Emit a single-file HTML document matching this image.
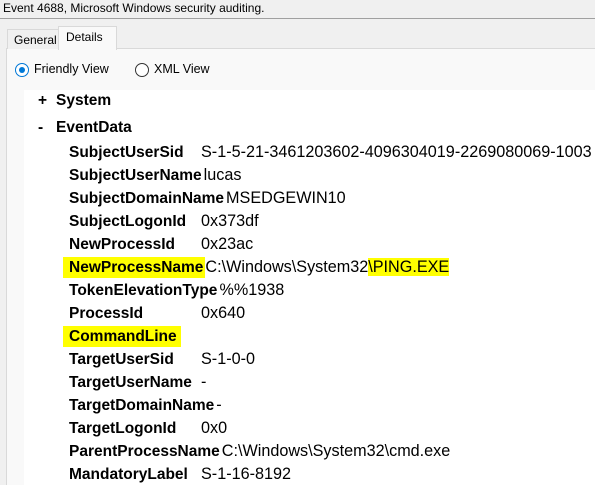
<!DOCTYPE html>
<html><head><meta charset="utf-8"><style>
html,body{margin:0;width:595px;height:485px;overflow:hidden}
body{background:#f0f0f0;font-family:"Liberation Sans",sans-serif;position:relative}
.title{position:absolute;left:3px;top:1px;font-size:12px;color:#000}
.hl{position:absolute;left:0;top:18px;width:595px;height:1px;background:#a0a0a0}
.tab{position:absolute;font-size:12px;color:#000;border:1px solid #d9d9d9;border-bottom:none}
.panel{position:absolute;left:6px;top:48px;width:600px;height:450px;border:1px solid #d9d9d9;background:#f9f9f9}
.radio{position:absolute;top:63px;width:12px;height:12px;border:1px solid #333;border-radius:50%;background:#fff}
.rl{position:absolute;top:62px;font-size:12.5px}
.white{position:absolute;left:24px;top:90px;width:580px;height:400px;background:#fff}
.row{position:absolute;left:69px;font-size:16.2px;white-space:nowrap;height:21px;line-height:21px}
.n{font-weight:bold;font-size:15.5px;display:inline-block;min-width:132px;padding-right:2px;box-sizing:border-box}
.y{background:#ffff00}
.h{position:absolute;font-weight:bold;font-size:15.5px;line-height:21px}
</style></head><body>
<div class="title">Event 4688, Microsoft Windows security auditing.</div>
<div class="hl"></div>
<div class="panel"></div>
<div class="tab" style="left:7px;top:29px;width:50px;height:19px;background:#f0f0f0;line-height:21px;padding-left:6px">General</div>
<div class="tab" style="left:58px;top:26px;width:50px;height:23px;background:#f9f9f9;line-height:20px;padding-left:7px">Details</div>
<div class="radio" style="left:15px;border-color:#0078d7"><div style="position:absolute;left:3px;top:3px;width:6px;height:6px;border-radius:50%;background:#0078d7"></div></div>
<div class="rl" style="left:34px">Friendly View</div>
<div class="radio" style="left:135px"></div>
<div class="rl" style="left:154px">XML View</div>
<div class="white"></div>
<div class="h" style="left:38px;top:90px">+</div><div class="h" style="left:56px;top:90px">System</div>
<div class="h" style="left:38px;top:117px">-</div><div class="h" style="left:56px;top:117px">EventData</div>
<div class="row" style="top:142px"><span class="n">SubjectUserSid</span>S-1-5-21-3461203602-4096304019-2269080069-1003</div>
<div class="row" style="top:165px"><span class="n">SubjectUserName</span>lucas</div>
<div class="row" style="top:188px"><span class="n">SubjectDomainName</span>MSEDGEWIN10</div>
<div class="row" style="top:211px"><span class="n">SubjectLogonId</span>0x373df</div>
<div class="row" style="top:234px"><span class="n">NewProcessId</span>0x23ac</div>
<div class="row" style="top:257px"><span class="n y" style="margin-left:-6px;padding-left:6px">NewProcessName</span>C:\Windows\System32<span class="y">\PING.EXE</span></div>
<div class="row" style="top:280px"><span class="n">TokenElevationType</span>%%1938</div>
<div class="row" style="top:303px"><span class="n">ProcessId</span>0x640</div>
<div class="row" style="top:326px"><span class="n y" style="min-width:0;margin-left:-6px;padding:0 4px 0 6px">CommandLine</span></div>
<div class="row" style="top:349px"><span class="n">TargetUserSid</span>S-1-0-0</div>
<div class="row" style="top:372px"><span class="n">TargetUserName</span>-</div>
<div class="row" style="top:395px"><span class="n">TargetDomainName</span>-</div>
<div class="row" style="top:418px"><span class="n">TargetLogonId</span>0x0</div>
<div class="row" style="top:441px"><span class="n">ParentProcessName</span>C:\Windows\System32\cmd.exe</div>
<div class="row" style="top:464px"><span class="n">MandatoryLabel</span>S-1-16-8192</div>
</body></html>
